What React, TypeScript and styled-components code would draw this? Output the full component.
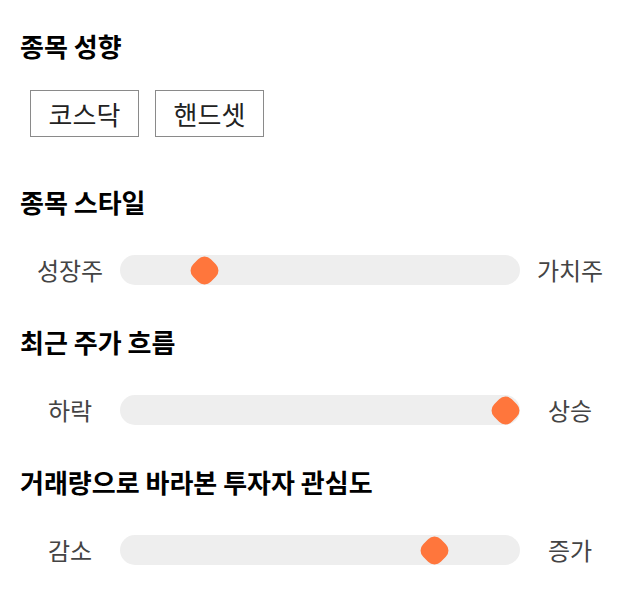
import React from "react";
import styled, { createGlobalStyle } from "styled-components";

const GlobalStyle = createGlobalStyle`
  html, body {
    margin: 0;
    padding: 0;
    background: #ffffff;
  }
  body {
    font-family: "Noto Sans CJK KR", "Noto Sans", sans-serif;
  }
`;

const Page = styled.div`
  width: 640px;
  padding: 30px 20px 0;
  box-sizing: border-box;
`;

const Section = styled.section<{ $gap: number; $after: number }>`
  display: flex;
  flex-direction: column;
  gap: ${(p) => p.$gap}px;
  margin-bottom: ${(p) => p.$after}px;
`;

const Heading = styled.h2`
  margin: 0;
  font-size: 26px;
  line-height: 32px;
  font-weight: 700;
  color: #000;
`;

const ButtonRow = styled.div`
  display: flex;
  gap: 16px;
  padding-left: 10px;
`;

const OptionButton = styled.button`
  width: 109px;
  height: 47px;
  box-sizing: border-box;
  border: 1px solid #8a8a8a;
  background: #fff;
  font-family: inherit;
  font-size: 26px;
  color: #222;
  padding: 0;
  cursor: pointer;
`;

const SliderRow = styled.div`
  display: grid;
  grid-template-columns: 100px 400px 100px;
  align-items: center;
  height: 30px;
`;

const EndLabel = styled.span`
  text-align: center;
  font-size: 24px;
  line-height: 30px;
  color: #444;
`;

const Track = styled.div`
  position: relative;
  height: 30px;
  border-radius: 15px;
  background: #eeeeee;
`;

const Thumb = styled.div`
  position: absolute;
  top: 50%;
  width: 25px;
  height: 25px;
  margin-left: -12.5px;
  margin-top: -12.5px;
  border-radius: 9px;
  background: #ff763c;
  transform: rotate(45deg);
`;

type SliderProps = { left: string; right: string; value: number };

const Slider: React.FC<SliderProps> = ({ left, right, value }) => (
  <SliderRow>
    <EndLabel>{left}</EndLabel>
    <Track>
      <Thumb style={{ left: `${14 + value * 371}px` }} />
    </Track>
    <EndLabel>{right}</EndLabel>
  </SliderRow>
);

export default function App() {
  return (
    <>
      <GlobalStyle />
      <Page>
        <Section $gap={28} $after={49}>
          <Heading>종목 성향</Heading>
          <ButtonRow>
            <OptionButton>코스닥</OptionButton>
            <OptionButton>핸드셋</OptionButton>
          </ButtonRow>
        </Section>
        <Section $gap={37} $after={41}>
          <Heading>종목 스타일</Heading>
          <Slider left="성장주" right="가치주" value={0.19} />
        </Section>
        <Section $gap={37} $after={41}>
          <Heading>최근 주가 흐름</Heading>
          <Slider left="하락" right="상승" value={1} />
        </Section>
        <Section $gap={37} $after={0}>
          <Heading>거래량으로 바라본 투자자 관심도</Heading>
          <Slider left="감소" right="증가" value={0.81} />
        </Section>
      </Page>
    </>
  );
}
